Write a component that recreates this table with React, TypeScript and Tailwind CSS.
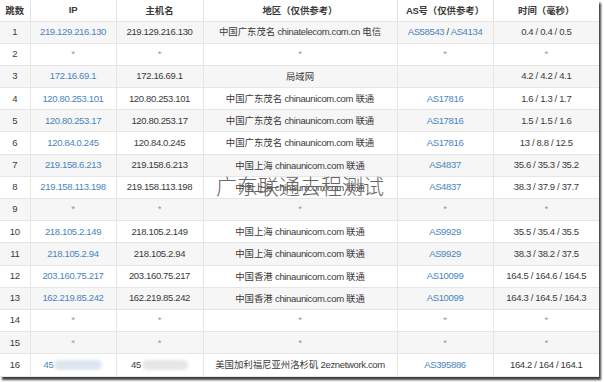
import React from 'react'

type Row = {
  hop: number
  ip: string
  host: string
  region: string
  as: string[]
  time: string
  blur?: boolean
}

const rows: Row[] = [
  { hop: 1, ip: '219.129.216.130', host: '219.129.216.130', region: '中国广东茂名 chinatelecom.com.cn 电信', as: ['AS58543', 'AS4134'], time: '0.4 / 0.4 / 0.5' },
  { hop: 2, ip: '*', host: '*', region: '*', as: ['*'], time: '*' },
  { hop: 3, ip: '172.16.69.1', host: '172.16.69.1', region: '局域网', as: [], time: '4.2 / 4.2 / 4.1' },
  { hop: 4, ip: '120.80.253.101', host: '120.80.253.101', region: '中国广东茂名 chinaunicom.com 联通', as: ['AS17816'], time: '1.6 / 1.3 / 1.7' },
  { hop: 5, ip: '120.80.253.17', host: '120.80.253.17', region: '中国广东茂名 chinaunicom.com 联通', as: ['AS17816'], time: '1.5 / 1.5 / 1.6' },
  { hop: 6, ip: '120.84.0.245', host: '120.84.0.245', region: '中国广东茂名 chinaunicom.com 联通', as: ['AS17816'], time: '13 / 8.8 / 12.5' },
  { hop: 7, ip: '219.158.6.213', host: '219.158.6.213', region: '中国上海 chinaunicom.com 联通', as: ['AS4837'], time: '35.6 / 35.3 / 35.2' },
  { hop: 8, ip: '219.158.113.198', host: '219.158.113.198', region: '中国上海 chinaunicom.com 联通', as: ['AS4837'], time: '38.3 / 37.9 / 37.7' },
  { hop: 9, ip: '*', host: '*', region: '*', as: ['*'], time: '*' },
  { hop: 10, ip: '218.105.2.149', host: '218.105.2.149', region: '中国上海 chinaunicom.com 联通', as: ['AS9929'], time: '35.5 / 35.4 / 35.5' },
  { hop: 11, ip: '218.105.2.94', host: '218.105.2.94', region: '中国上海 chinaunicom.com 联通', as: ['AS9929'], time: '38.3 / 38.2 / 37.5' },
  { hop: 12, ip: '203.160.75.217', host: '203.160.75.217', region: '中国香港 chinaunicom.com 联通', as: ['AS10099'], time: '164.5 / 164.6 / 164.5' },
  { hop: 13, ip: '162.219.85.242', host: '162.219.85.242', region: '中国香港 chinaunicom.com 联通', as: ['AS10099'], time: '164.3 / 164.5 / 164.3' },
  { hop: 14, ip: '*', host: '*', region: '*', as: ['*'], time: '*' },
  { hop: 15, ip: '*', host: '*', region: '*', as: ['*'], time: '*' },
  { hop: 16, ip: '45', host: '45', region: '美国加利福尼亚州洛杉矶 2eznetwork.com', as: ['AS395886'], time: '164.2 / 164 / 164.1', blur: true },
]

const font = { fontFamily: '"Liberation Sans", "Noto Sans CJK SC", sans-serif' }

// CJK runs get their own family and size, like YaHei's CJK vs latin glyphs
function Mixed({ text }: { text: string }) {
  const parts = text.split(/([\u3000-\u9fff\uff00-\uffef]+)/)
  return (
    <>
      {parts.map((p, i) =>
        /[\u3000-\u9fff\uff00-\uffef]/.test(p) ? (
          <span key={i} className="text-[9.4px] tracking-normal" style={{ fontFamily: '"Noto Sans CJK SC", sans-serif' }}>
            {p}
          </span>
        ) : (
          <React.Fragment key={i}>{p}</React.Fragment>
        )
      )}
    </>
  )
}

const headers = ['跳数', 'IP', '主机名', '地区（仅供参考）', 'AS号（仅供参考）', '时间（毫秒）']

export default function App() {
  return (
    <div className="w-[604px] h-[382px] bg-white" style={font}>
      <div className="relative w-[599px] bg-white shadow-[2px_3px_2px_rgba(0,0,0,0.75)]">
        <table className="w-full border-collapse text-[9.5px] tracking-[-0.35px] text-[#3a3a3a] text-center table-fixed">
          <colgroup>
            <col className="w-[30px]" />
            <col className="w-[86px]" />
            <col className="w-[87px]" />
            <col className="w-[194px]" />
            <col className="w-[96px]" />
            <col />
          </colgroup>
          <thead>
            <tr className="h-[21px]">
              {headers.map((h, i) => (
                <th
                  key={h}
                  className={`font-bold p-0 border-b border-[#e6e6e6] ${i > 0 ? 'border-l border-l-[#e2e2e2]' : ''}`}
                >
                  <Mixed text={h} />
                </th>
              ))}
            </tr>
          </thead>
          <tbody>
            {rows.map((r) => (
              <tr key={r.hop} className={`h-[22.2px] ${r.hop % 2 === 1 ? 'bg-[#f6f6f6]' : 'bg-white'}`}>
                <td className="p-0 border-b border-[#e6e6e6]">{r.hop}</td>
                <td className={`p-0 border-b border-l border-[#e6e6e6] ${r.ip === '*' ? 'text-[#999]' : 'text-[#4a84c0]'}`}>
                  {r.blur ? (
                    <span className="inline-flex items-center">
                      45
                      <span className="inline-block w-[48px] h-[10px] ml-[1px] rounded-full bg-[#dde6ef] blur-[1.5px]" />
                    </span>
                  ) : (
                    r.ip
                  )}
                </td>
                <td className={`p-0 border-b border-l border-[#e6e6e6] ${r.host === '*' ? 'text-[#999]' : ''}`}>
                  {r.blur ? (
                    <span className="inline-flex items-center">
                      45
                      <span className="inline-block w-[46px] h-[10px] ml-[1px] rounded-full bg-[#e6e6e6] blur-[1.5px]" />
                    </span>
                  ) : (
                    r.host
                  )}
                </td>
                <td className={`p-0 border-b border-l border-[#e6e6e6] ${r.region === '*' ? 'text-[#999]' : ''}`}>
                  <Mixed text={r.region} />
                </td>
                <td className="p-0 border-b border-l border-[#e6e6e6]">
                  {r.as.map((a, i) => (
                    <React.Fragment key={a}>
                      {i > 0 && <span> / </span>}
                      <span className={a === '*' ? 'text-[#999]' : 'text-[#4a84c0]'}>{a}</span>
                    </React.Fragment>
                  ))}
                </td>
                <td className={`p-0 border-b border-l border-[#e6e6e6] ${r.time === '*' ? 'text-[#999]' : ''}`}>{r.time}</td>
              </tr>
            ))}
          </tbody>
        </table>

        {/* watermark */}
        <div
          className="absolute left-[216px] top-[175px] text-[21px] leading-none text-[#666] font-extralight whitespace-nowrap pointer-events-none"
          style={{ fontFamily: '"Noto Sans CJK SC", sans-serif' }}
        >
          广东联通去程测试
        </div>
      </div>
    </div>
  )
}
